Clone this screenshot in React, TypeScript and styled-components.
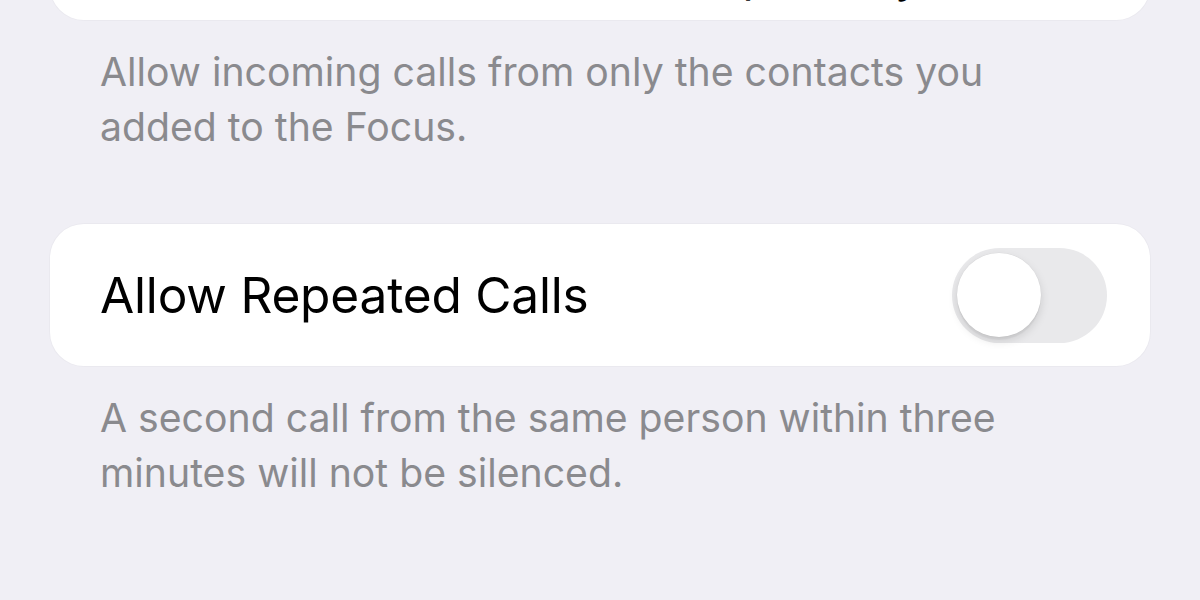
import React from "react";
import styled, { createGlobalStyle } from "styled-components";

const Global = createGlobalStyle`
  html, body { margin: 0; padding: 0; background: #f0eff5; }
  body { font-family: Inter, "Noto Sans", "Liberation Sans", sans-serif; -webkit-font-smoothing: antialiased; }
`;

const Page = styled.div`
  width: 1200px;
  height: 600px;
  overflow: hidden;
  background: #f0eff5;
  padding: 0 50px;
  box-sizing: border-box;
`;

const Card = styled.div<{ $pullUp?: number }>`
  background: #ffffff;
  border-radius: 34px;
  box-shadow: 0 0 0 1px rgba(0, 0, 0, 0.025);
  margin-top: ${(p) => (p.$pullUp ? `-${p.$pullUp}px` : "0")};
`;

const TopRow = styled.div`
  padding: 40px 50px 16px;
  font-size: 46px;
  line-height: 58px;
  color: #000;
  white-space: nowrap;
`;

const Row = styled.div`
  height: 142px;
  display: flex;
  align-items: center;
  justify-content: space-between;
  padding: 0 43px 0 50px;
  box-sizing: border-box;
`;

const Title = styled.span`
  font-size: 49.6px;
  color: #000;
  letter-spacing: -0.2px;
`;

const Footer = styled.p<{ $gapBelow?: number }>`
  margin: 0 0 ${(p) => p.$gapBelow ?? 0}px;
  padding: 24px 50px 0;
  font-size: 39.2px;
  line-height: 55px;
  color: #8a8a8e;
`;

const Track = styled.div<{ $on?: boolean }>`
  width: 155px;
  height: 95px;
  border-radius: 48px;
  background: ${(p) => (p.$on ? "#34c759" : "#e9e9eb")};
  display: flex;
  align-items: center;
  justify-content: ${(p) => (p.$on ? "flex-end" : "flex-start")};
  padding: 0 5px;
  box-sizing: border-box;
`;

const Knob = styled.div`
  width: 84px;
  height: 84px;
  border-radius: 50%;
  background: #fff;
  box-shadow: 0 4px 10px rgba(0, 0, 0, 0.13), 0 3px 1px rgba(0, 0, 0, 0.04),
    0 0 0 0.5px rgba(0, 0, 0, 0.04);
`;

const Toggle = ({ on }: { on?: boolean }) => (
  <Track $on={on} role="switch" aria-checked={!!on}>
    <Knob />
  </Track>
);

export default function App() {
  return (
    <>
      <Global />
      <Page>
        <Card $pullUp={94}>
          <TopRow>Allow Calls From Allowed People Only</TopRow>
        </Card>
        <Footer $gapBelow={70}>
          Allow incoming calls from only the contacts you added to the Focus.
        </Footer>
        <Card>
          <Row>
            <Title>Allow Repeated Calls</Title>
            <Toggle />
          </Row>
        </Card>
        <Footer>
          A second call from the same person within three minutes will not be
          silenced.
        </Footer>
      </Page>
    </>
  );
}
